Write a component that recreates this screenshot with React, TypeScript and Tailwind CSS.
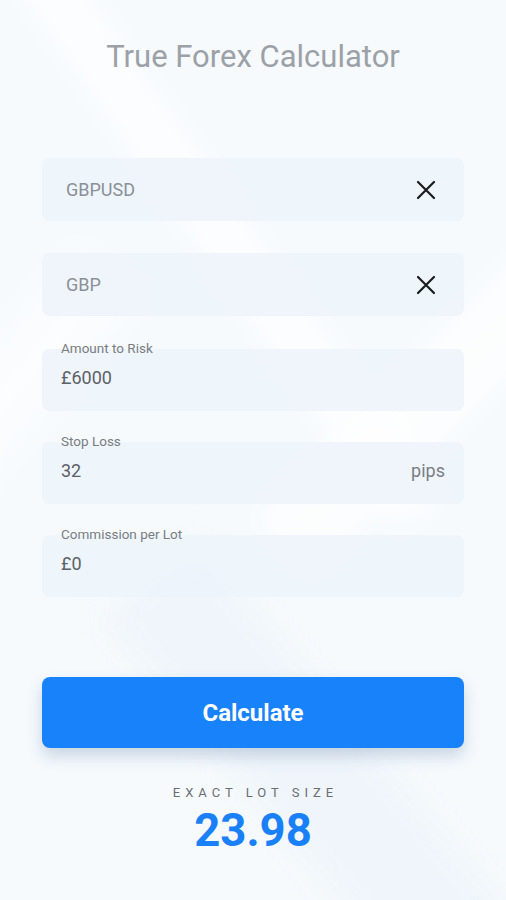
function CloseIcon() {
  return (
    <svg width="20" height="20" viewBox="0 0 20 20" className="text-[#1b1b1b]">
      <path
        d="M2 2 L18 18 M18 2 L2 18"
        stroke="currentColor"
        strokeWidth="2.2"
        strokeLinecap="round"
        fill="none"
      />
    </svg>
  );
}

function PlainField({ value }: { value: string }) {
  return (
    <div className="flex h-[63px] items-center justify-between rounded-lg bg-[#edf4fb]/90 pl-6 pr-[28px]">
      <span className="text-[18px] text-[#8b9098]">{value}</span>
      <CloseIcon />
    </div>
  );
}

function LabeledField({
  label,
  value,
  suffix,
}: {
  label: string;
  value: string;
  suffix?: string;
}) {
  return (
    <div className="relative">
      <span className="absolute left-[19px] top-[-11px] text-[13.5px] text-[#7a7d82]">
        {label}
      </span>
      <div className="flex h-[62px] items-center justify-between rounded-lg bg-[#edf4fb]/90 pb-[5px] pl-[19px] pr-[19px]">
        <span className="text-[18px] text-[#5d6168]">{value}</span>
        {suffix && (
          <span className="text-[18px] text-[#7a7e85]">{suffix}</span>
        )}
      </div>
    </div>
  );
}

export default function App() {
  return (
    <div
      className="relative h-[900px] w-[506px] overflow-hidden bg-[#f6fafd]"
      style={{ fontFamily: "Roboto, 'Noto Sans', sans-serif" }}
    >
      {/* soft diagonal streaks in the background */}
      <div className="pointer-events-none absolute inset-0">
        <div className="absolute left-[190px] top-[-120px] h-[700px] w-[60px] rotate-[-35deg] bg-white/60 blur-md" />
        <div className="absolute left-[420px] top-[120px] h-[500px] w-[80px] rotate-[45deg] bg-white/70 blur-md" />
        <div className="absolute left-[250px] top-[520px] h-[500px] w-[120px] rotate-[-40deg] bg-[#eef4fa]/80 blur-lg" />
        <div className="absolute left-[-60px] top-[220px] h-[400px] w-[90px] rotate-[40deg] bg-white/50 blur-lg" />
      </div>

      <div className="relative flex flex-col px-[42px]">
        <h1 className="pt-[37px] text-center text-[31px] font-normal leading-[40px] text-[#9ca1a8]">
          True Forex Calculator
        </h1>

        <div className="mt-[81px] flex flex-col">
          <PlainField value="GBPUSD" />
          <div className="mt-[32px]">
            <PlainField value="GBP" />
          </div>
          <div className="mt-[33px] flex flex-col gap-[31px]">
            <LabeledField label="Amount to Risk" value="£6000" />
            <LabeledField label="Stop Loss" value="32" suffix="pips" />
            <LabeledField label="Commission per Lot" value="£0" />
          </div>
        </div>

        <button className="mt-[80px] flex h-[71px] items-center justify-center rounded-lg bg-[#1882fb] text-[24px] font-bold text-white shadow-[0_8px_16px_rgba(40,80,130,0.22)]">
          Calculate
        </button>

        <div className="mt-[35px] flex flex-col items-center">
          <span className="pl-[5px] text-[13px] tracking-[5px] text-[#6b6e72]">
            EXACT LOT SIZE
          </span>
          <span className="mt-[3px] text-[45.5px] font-bold leading-[50px] text-[#1a80f7]">
            23.98
          </span>
        </div>
      </div>
    </div>
  );
}
